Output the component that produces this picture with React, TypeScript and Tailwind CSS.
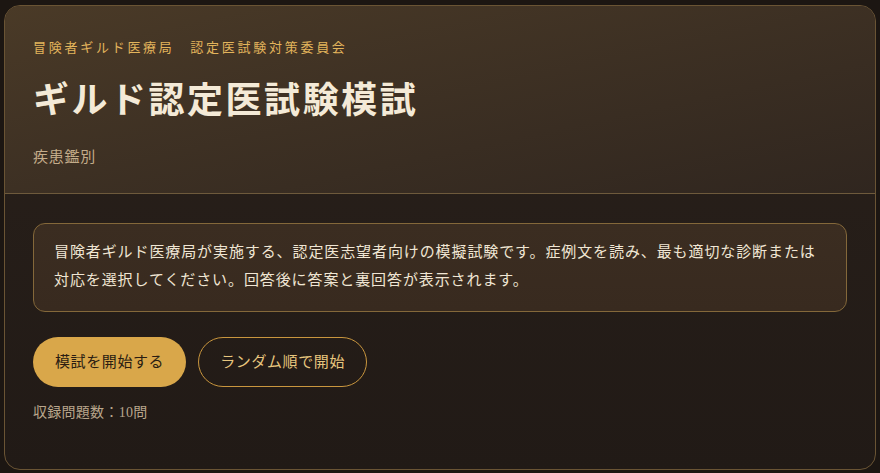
import React from "react";

const serif = "font-['Liberation_Serif','Noto_Sans_CJK_JP',serif]";

const StartScreen: React.FC = () => {
  return (
    <div className={`min-h-screen w-full bg-[#1c1612] px-1 pt-[5px] pb-[5px] ${serif}`}>
      <div className="overflow-hidden rounded-[16px] border border-[#6a5434] bg-gradient-to-b from-[#2a211b] to-[#211a16]">
        <div className="border-b border-[#6e5a3c] bg-gradient-to-br from-[#4a3a27] to-[#30261f] px-7 pt-[32px] pb-[25px]">
          <p className="text-[13px] leading-[20px] tracking-[0.21em] text-[#e2b45c]">
            冒険者ギルド医療局　認定医試験対策委員会
          </p>
          <h1 className="mt-[21px] text-[36px] font-bold leading-[44px] tracking-[0.07em] text-[#f4ead7]">
            ギルド認定医試験模試
          </h1>
          <p className="mt-[23px] text-[15px] leading-[22px] tracking-[0.05em] text-[#c4ac8a]">
            疾患鑑別
          </p>
        </div>

        <div className="px-7 pt-[29px] pb-[46px]">
          <div className="rounded-[12px] border border-[#84683a] bg-gradient-to-b from-[#3b2d21] to-[#382a1f] px-5 pt-[14px] pb-[17px]">
            <p className="text-[15px] leading-[28px] tracking-[0.06em] text-[#f0e6d4]">
              冒険者ギルド医療局が実施する、認定医志望者向けの模擬試験です。症例文を読み、最も適切な診断または対応を選択してください。回答後に答案と裏回答が表示されます。
            </p>
          </div>

          <div className="mt-[25px] flex items-center gap-3">
            <button className="h-[50px] rounded-full bg-[#d9a74a] px-[22px] text-[15px] tracking-[0.04em] text-[#2a1d12]">
              模試を開始する
            </button>
            <button className="h-[50px] rounded-full border border-[#c9963e] px-[21px] text-[15px] tracking-[0.04em] text-[#e8c67e]">
              ランダム順で開始
            </button>
          </div>

          <p className="mt-[16px] text-[14px] leading-[20px] tracking-[0.02em] text-[#b9a68c]">
            収録問題数：10問
          </p>
        </div>
      </div>
    </div>
  );
};

export default function App() {
  return <StartScreen />;
}
